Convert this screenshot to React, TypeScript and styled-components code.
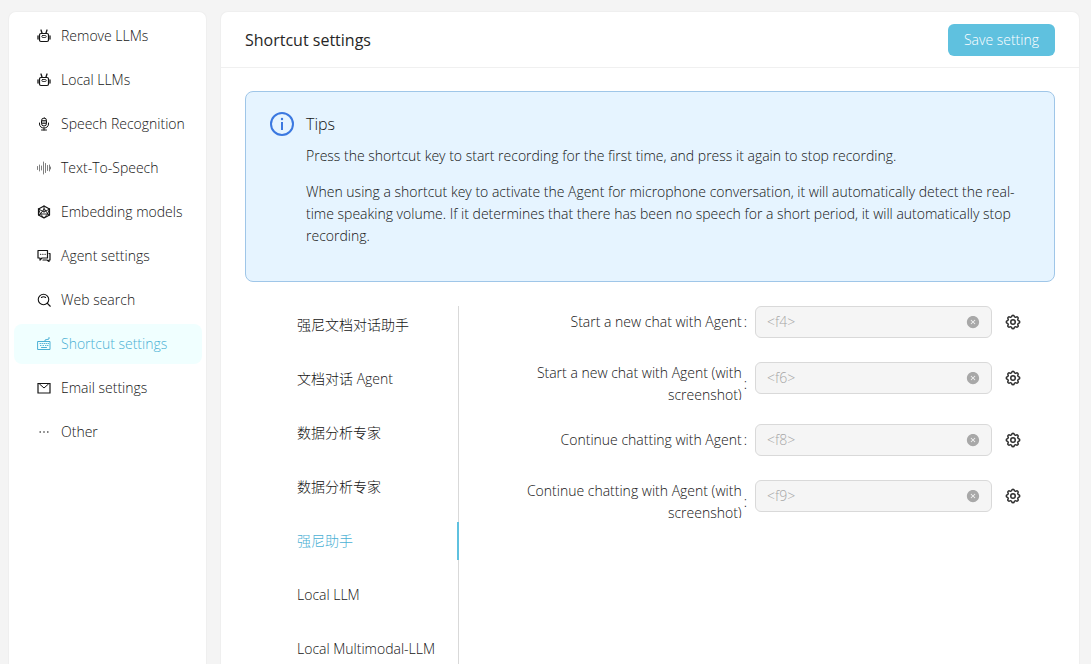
import React, { useState } from "react";
import styled, { createGlobalStyle } from "styled-components";
import { AiFillCloseCircle, AiOutlineEllipsis } from "react-icons/ai";
import { TbSettings } from "react-icons/tb";

const primary = "#5fc1df";
const primaryText = "#4bb0d4";
const ink = "#141414";

const GlobalStyle = createGlobalStyle`
  *, *::before, *::after { box-sizing: border-box; }
  body {
    margin: 0;
    background: #f4f4f4;
    color: ${ink};
    font: 300 14px/22px "Open Sans", "Noto Sans CJK SC", sans-serif;
  }
  button, input { font: inherit; }
`;

const Page = styled.div`
  display: flex;
  align-items: stretch;
  gap: 13px;
  height: 100vh;
  padding: 11px 11px 0 8px;
  overflow: hidden;
`;

const Panel = styled.div`
  background: #fff;
  border: 1px solid #efefef;
  border-bottom: 0;
  border-radius: 8px 8px 0 0;
`;

const Sidebar = styled(Panel)`
  flex: 0 0 199px;
  padding: 4px 4px 4px 5px;
  display: flex;
  flex-direction: column;
  gap: 4px;
`;

const NavLink = styled.a<{ $active?: boolean }>`
  display: flex;
  align-items: center;
  gap: 10px;
  height: 40px;
  flex: none;
  padding: 0 12px 0 23px;
  border-radius: 8px;
  text-decoration: none;
  white-space: nowrap;
  color: ${(p) => (p.$active ? primaryText : ink)};
  background: ${(p) => (p.$active ? "#f0ffff" : "transparent")};
`;

const NavIcon = styled.span`
  display: flex;
  width: 14px;
  height: 14px;
`;

const Main = styled(Panel)`
  flex: 1;
  min-width: 0;
`;

const Header = styled.header`
  display: flex;
  align-items: center;
  justify-content: space-between;
  height: 56px;
  padding: 0 24px;
  margin-bottom: -1px;
  border-bottom: 1px solid #f0f0f0;
`;

const Title = styled.h1`
  margin: 0;
  font-size: 16px;
  line-height: 24px;
  font-weight: 400;
  color: #262626;
`;

const SaveButton = styled.button`
  height: 32px;
  padding: 0 16px;
  border: 0;
  border-radius: 6px;
  background: ${primary};
  color: #fff;
  cursor: pointer;
`;

const Body = styled.div`
  padding: 24px;
`;

const Alert = styled.section`
  display: flex;
  gap: 12px;
  padding: 20px 24px;
  background: #e6f4ff;
  border: 1px solid #9fc6e8;
  border-radius: 8px;
`;

const AlertIcon = styled.svg`
  flex: none;
  width: 24px;
  height: 24px;
  color: #3b78e0;
`;

const AlertTitle = styled.h2`
  margin: 0 0 8px;
  font-size: 16px;
  line-height: 25px;
  font-weight: 300;
`;

const Paragraph = styled.p`
  margin: 0 0 14px;
`;

const Columns = styled.div`
  display: flex;
  gap: 24px;
  margin-top: 24px;
`;

const TabList = styled.div`
  display: flex;
  flex-direction: column;
  gap: 16px;
  flex: 0 0 214px;
  padding-left: 28px;
  border-right: 1px solid #d9d9d9;
`;

const Tab = styled.button<{ $active?: boolean }>`
  height: 38px;
  flex: none;
  margin-right: -1px;
  padding: 0 12px 0 24px;
  border: 0;
  border-right: 2px solid ${(p) => (p.$active ? primary : "transparent")};
  background: none;
  text-align: left;
  white-space: nowrap;
  color: ${(p) => (p.$active ? primaryText : ink)};
  cursor: pointer;
`;

const Form = styled.form`
  flex: 1;
  min-width: 0;
  display: flex;
  flex-direction: column;
  gap: 24px;
`;

const FormRow = styled.div`
  display: grid;
  grid-template-columns: minmax(0, 272fr) minmax(0, 237fr) minmax(0, 63fr);
  align-items: start;
`;

const Label = styled.label`
  display: block;
  max-height: 38px;
  overflow: hidden;
  text-align: right;
`;

const LabelText = styled.span`
  display: flex;
  align-items: center;
  justify-content: flex-end;
  min-height: 32px;

  &::after {
    content: ":";
    margin: 0 8px 0 2px;
  }
`;

const KeyField = styled.div`
  display: flex;
  align-items: center;
  height: 32px;
  padding: 0 11px;
  border: 1px solid #d9d9d9;
  border-radius: 6px;
  background: #f5f5f5;
`;

const KeyInput = styled.input`
  flex: 1;
  min-width: 0;
  padding: 0;
  border: 0;
  background: none;
  color: #a6a6a6;
`;

const IconButton = styled.button<{ $color: string }>`
  display: flex;
  align-items: center;
  justify-content: center;
  height: 32px;
  padding: 0;
  border: 0;
  background: none;
  color: ${(p) => p.$color};
  cursor: pointer;
`;

const GearButton = styled(IconButton)`
  width: 18px;
  margin-left: 12px;
`;

const ClearButton = styled(IconButton)`
  width: 14px;
`;

const Svg = ({ children }: { children: React.ReactNode }) => (
  <svg
    width="14"
    height="14"
    viewBox="0 0 28 28"
    fill="none"
    stroke="currentColor"
    strokeWidth="2"
    strokeLinecap="round"
    strokeLinejoin="round"
    aria-hidden="true"
  >
    {children}
  </svg>
);

const Robot = () => (
  <Svg>
    <path d="M8 2l2 6M20 2l-2 6" strokeWidth="2.6" />
    <rect x="5" y="9" width="18" height="16" rx="3" strokeWidth="2.4" />
    <path d="M2 14v6M26 14v6" strokeWidth="2.6" />
    <rect x="9.500" y="13" width="9" height="4" rx="2" strokeWidth="1.6" />
  </Svg>
);

const Mic = () => (
  <Svg>
    <rect x="9" y="2" width="10" height="16" rx="5" />
    <path d="M10 7h8M10 10h8M10 13h8" strokeWidth="1.6" />
    <path d="M5 12v2c0 5 4 8 9 8s9-3 9-8v-2M14 22v4M9 26h10" />
  </Svg>
);

const Wave = () => (
  <Svg>
    <path
      d="M1 11v6M5 8v12M9 10v8M13 2v24M17 5v18M21 9v10M25 8v12M27 12v4"
      strokeWidth="1.500"
      stroke="#555"
    />
  </Svg>
);

const Dice = () => (
  <Svg>
    <path d="M14 2l11 6v12l-11 6-11-6V8z" strokeWidth="2.400" />
    <path d="M14 2v12M3 8l11 6 11-6M14 8l-7 10h14zM3 20l4-2-4-10M25 20l-4-2 4-10M7 18l7 8 7-8" strokeWidth="1.800" />
  </Svg>
);

const Chats = () => (
  <Svg>
    <path d="M2 3h19v15H10l-4 4v-4H2z" strokeWidth="2.400" />
    <path d="M7 10.500h.5M11.500 10.500h.5M16 10.500h.5" strokeWidth="2.400" />
    <path d="M24 9h2v13h-2v3l-4-3h-8" strokeWidth="2.400" />
  </Svg>
);

const Search = () => (
  <Svg>
    <circle cx="13" cy="13" r="10.500" strokeWidth="2.200" />
    <path d="M20.500 20.500l6 6M9 9c2-2 6-2 8 0" strokeWidth="2.200" />
  </Svg>
);

const Keyboard = () => (
  <Svg>
    <rect x="2" y="9" width="24" height="16" />
    <path d="M16 9V6l8-2V1M6 13h1M10 13h1M14 13h1M18 13h1M22 13h1M7 17h1M12 17h1M17 17h1M21 17h1M9 21h10" />
  </Svg>
);

const Mail = () => (
  <Svg>
    <path d="M2 5h24v19H2z" strokeWidth="2.400" strokeLinejoin="miter" />
    <path d="M5 6l9 8 9-8" strokeWidth="2" />
  </Svg>
);

const navItems = [
  { label: "Remove LLMs", icon: <Robot /> },
  { label: "Local LLMs", icon: <Robot /> },
  { label: "Speech Recognition", icon: <Mic /> },
  { label: "Text-To-Speech", icon: <Wave /> },
  { label: "Embedding models", icon: <Dice /> },
  { label: "Agent settings", icon: <Chats /> },
  { label: "Web search", icon: <Search /> },
  { label: "Shortcut settings", icon: <Keyboard /> },
  { label: "Email settings", icon: <Mail /> },
  { label: "Other", icon: <AiOutlineEllipsis size={14} /> },
];

const agents = [
  "强尼文档对话助手",
  "文档对话 Agent",
  "数据分析专家",
  "数据分析专家",
  "强尼助手",
  "Local LLM",
  "Local Multimodal-LLM",
];

const shortcuts = [
  { id: "new-chat", label: "Start a new chat with Agent", key: "<f4>" },
  { id: "new-chat-shot", label: "Start a new chat with Agent (with screenshot)", key: "<f6>" },
  { id: "continue", label: "Continue chatting with Agent", key: "<f8>" },
  { id: "continue-shot", label: "Continue chatting with Agent (with screenshot)", key: "<f9>" },
];

export default function App() {
  const [agent, setAgent] = useState(4);

  return (
    <>
      <GlobalStyle />
      <Page>
        <Sidebar as="nav" aria-label="Settings">
          {navItems.map((item) => (
            <NavLink key={item.label} href="#" $active={item.label === "Shortcut settings"}>
              <NavIcon>{item.icon}</NavIcon>
              {item.label}
            </NavLink>
          ))}
        </Sidebar>
        <Main as="main">
          <Header>
            <Title>Shortcut settings</Title>
            <SaveButton type="submit" form="shortcuts">Save setting</SaveButton>
          </Header>
          <Body>
            <Alert>
              <AlertIcon viewBox="0 0 24 24" fill="none" stroke="currentColor" strokeWidth="2" aria-hidden="true">
                <circle cx="12" cy="12" r="11" />
                <path d="M12 10v8" />
                <circle cx="12" cy="7" r="1.2" fill="currentColor" stroke="none" />
              </AlertIcon>
              <div>
                <AlertTitle>Tips</AlertTitle>
                <Paragraph>
                  Press the shortcut key to start recording for the first time, and press it again to stop recording.
                </Paragraph>
                <Paragraph>
                  When using a shortcut key to activate the Agent for microphone conversation, it will automatically
                  detect the real-time speaking volume. If it determines that there has been no speech for a short
                  period, it will automatically stop recording.
                </Paragraph>
              </div>
            </Alert>
            <Columns>
              <TabList role="tablist" aria-orientation="vertical">
                {agents.map((name, i) => (
                  <Tab
                    key={i}
                    type="button"
                    role="tab"
                    aria-selected={i === agent}
                    $active={i === agent}
                    onClick={() => setAgent(i)}
                  >
                    {name}
                  </Tab>
                ))}
              </TabList>
              <Form id="shortcuts" onSubmit={(e) => e.preventDefault()}>
                {shortcuts.map((s) => (
                  <FormRow key={s.id}>
                    <Label htmlFor={s.id}>
                      <LabelText>{s.label}</LabelText>
                    </Label>
                    <KeyField>
                      <KeyInput id={s.id} type="text" value={s.key} readOnly />
                      <ClearButton type="button" aria-label="Clear" $color="#a8a8a8">
                        <AiFillCloseCircle size={14} />
                      </ClearButton>
                    </KeyField>
                    <GearButton type="button" aria-label="Configure" $color="#303030">
                      <TbSettings size={18} />
                    </GearButton>
                  </FormRow>
                ))}
              </Form>
            </Columns>
          </Body>
        </Main>
      </Page>
    </>
  );
}
